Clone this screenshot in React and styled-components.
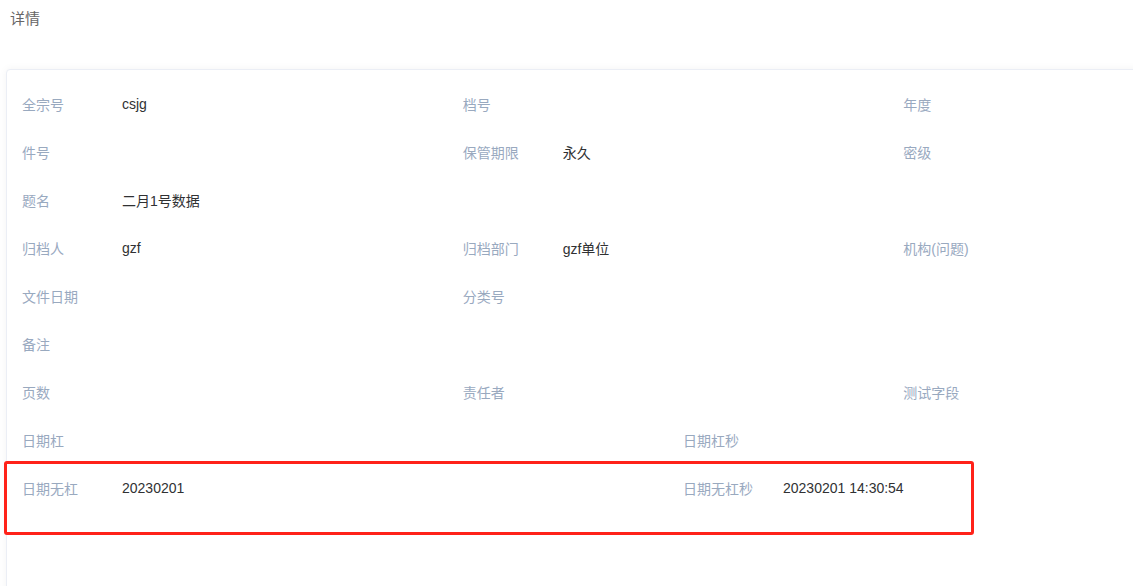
import styled, { createGlobalStyle } from "styled-components";

const fields = [
  { label: "全宗号", value: "csjg", span: 2 },
  { label: "档号", value: "", span: 2 },
  { label: "年度", value: "", span: 2 },
  { label: "件号", value: "", span: 2 },
  { label: "保管期限", value: "永久", span: 2 },
  { label: "密级", value: "", span: 2 },
  { label: "题名", value: "二月1号数据", span: 6 },
  { label: "归档人", value: "gzf", span: 2 },
  { label: "归档部门", value: "gzf单位", span: 2 },
  { label: "机构(问题)", value: "", span: 2 },
  { label: "文件日期", value: "", span: 2 },
  { label: "分类号", value: "", span: 4 },
  { label: "备注", value: "", span: 6 },
  { label: "页数", value: "", span: 2 },
  { label: "责任者", value: "", span: 2 },
  { label: "测试字段", value: "", span: 2 },
  { label: "日期杠", value: "", span: 3 },
  { label: "日期杠秒", value: "", span: 3 },
  { label: "日期无杠", value: "20230201", span: 3 },
  { label: "日期无杠秒", value: "20230201 14:30:54", span: 3 },
];

export default function App() {
  return (
    <Page>
      <GlobalStyle />
      <Title>详情</Title>
      <Card>
        <Grid>
          {fields.map((f) => (
            <Item key={f.label} $span={f.span}>
              <Label>{f.label}</Label>
              <Value>{f.value}</Value>
            </Item>
          ))}
        </Grid>
      </Card>
      <Highlight />
    </Page>
  );
}

const GlobalStyle = createGlobalStyle`
  html, body {
    margin: 0;
    background: #fff;
    overflow: hidden;
  }
  body {
    font-family: "Liberation Sans", "Noto Sans CJK SC", sans-serif;
  }
`;

const Page = styled.div`
  position: relative;
  width: 1133px;
  height: 586px;
  overflow: hidden;
`;

const Title = styled.div`
  padding: 9px 10px 0;
  height: 69px;
  box-sizing: border-box;
  font-size: 15px;
  line-height: 20px;
  color: #666;
`;

const Card = styled.div`
  margin-left: 6px;
  width: 1354px;
  min-height: 560px;
  box-sizing: border-box;
  border: 1px solid #ebeef5;
  border-radius: 4px;
  box-shadow: 0 0 8px rgba(0, 0, 0, 0.05);
  padding: 10px 15px;
  background: #fff;
`;

const Grid = styled.div`
  display: grid;
  grid-template-columns: repeat(6, 1fr);
  width: 1322px;
`;

const Item = styled.div`
  grid-column: span ${(p) => p.$span};
  display: flex;
  align-items: center;
  height: 48px;
  font-size: 14px;
`;

const Label = styled.span`
  width: 100px;
  flex-shrink: 0;
  color: #99a9bf;
`;

const Value = styled.span`
  color: #303133;
`;

const Highlight = styled.div`
  position: absolute;
  left: 4px;
  top: 461px;
  width: 970px;
  height: 74px;
  box-sizing: border-box;
  border: 3px solid #ff2219;
  border-radius: 3px;
  pointer-events: none;
`;
